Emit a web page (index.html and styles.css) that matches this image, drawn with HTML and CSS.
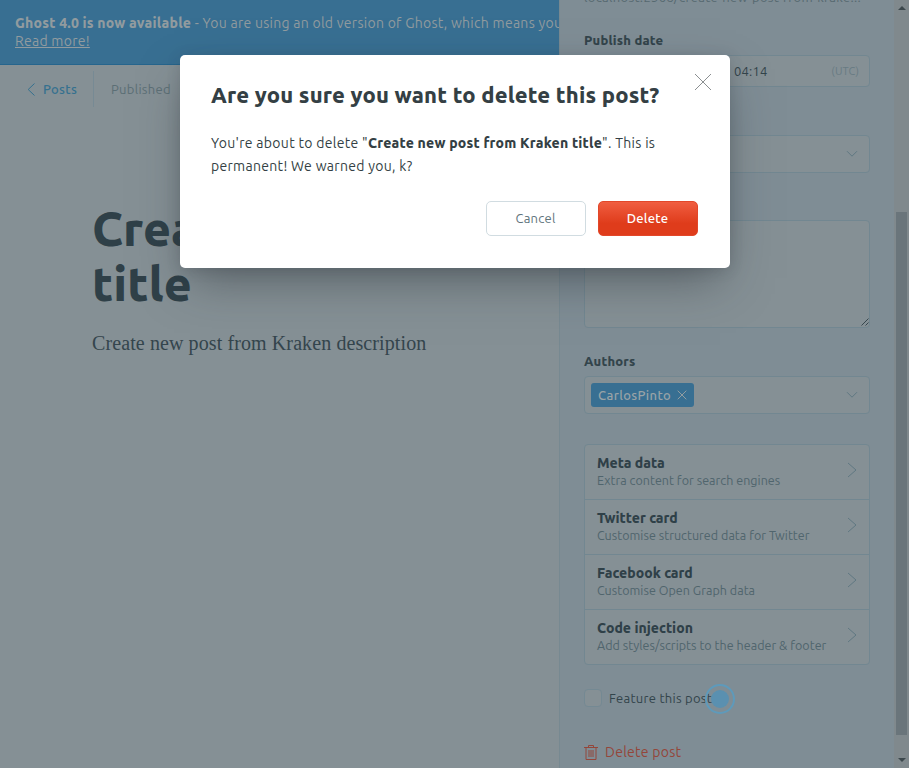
FILE: index.html
```
<!DOCTYPE html>
<html lang="en">
<head>
<meta charset="utf-8">
<title>Ghost editor</title>
<link rel="stylesheet" href="styles.css">
</head>
<body>
<div class="app">
  <main class="editor">
    <div class="alert"><div class="alert-line"><b>Ghost 4.0 is now available</b> - You are using an old version of Ghost, which means you</div><a class="alert-link">Read more!</a></div>
    <header class="toolbar">
      <a class="back"><svg width="8" height="13" viewBox="0 0 8 13"><path d="M7.5 .5L1.2 6.5l6.3 6"/></svg>Posts</a>
      <span class="status">Published</span>
    </header>
    <article class="post">
      <h1>Create new post from Kraken<br>title</h1>
      <p>Create new post from Kraken description</p>
    </article>
  </main>
  <aside class="settings">
    <div class="url">localhost:2368/create-new-post-from-krake...</div>
    <label class="label">Publish date</label>
    <div class="dates"><span class="time">04:14</span><span class="utc">(UTC)</span></div>
    <div class="field select tags"><svg class="chev" width="12" height="8" viewBox="0 0 12 8"><path d="M1 1.2l5 5 5-5"/></svg></div>
    <div class="field excerpt"><svg width="8" height="8" viewBox="0 0 8 8"><path d="M.5 7.5l7-7M4.5 7.5l3-3"/></svg></div>
    <label class="label authors-label">Authors</label>
    <div class="field select authors"><span class="token">CarlosPinto<svg width="10" height="10" viewBox="0 0 10 10"><path d="M.7.7l8.6 8.6M9.3.7L.7 9.3"/></svg></span><svg class="chev" width="12" height="8" viewBox="0 0 12 8"><path d="M1 1.2l5 5 5-5"/></svg></div>
    <ul class="nav">
      <li><div><b>Meta data</b><span>Extra content for search engines</span></div><svg width="10" height="16" viewBox="0 0 10 16"><path d="M1 1l8 7-8 7"/></svg></li>
      <li><div><b>Twitter card</b><span>Customise structured data for Twitter</span></div><svg width="10" height="16" viewBox="0 0 10 16"><path d="M1 1l8 7-8 7"/></svg></li>
      <li><div><b>Facebook card</b><span>Customise Open Graph data</span></div><svg width="10" height="16" viewBox="0 0 10 16"><path d="M1 1l8 7-8 7"/></svg></li>
      <li><div><b>Code injection</b><span>Add styles/scripts to the header &amp; footer</span></div><svg width="10" height="16" viewBox="0 0 10 16"><path d="M1 1l8 7-8 7"/></svg></li>
    </ul>
    <div class="feature"><i class="box"></i><span>Feature this post</span></div>
    <div class="delete-post"><svg width="14" height="15" viewBox="0 0 14 15"><path d="M0 2.5h14M4.5 2.5v-2h5v2M2 2.5v12h10v-12M5 5v7M7 5v7M9 5v7"/></svg>Delete post</div>
  </aside>
  <div class="scrollbar"><i class="arrow up"></i><i class="thumb"></i><i class="arrow down"></i></div>
</div>
<svg class="pointer" width="30" height="30" viewBox="0 0 30 30"><circle cx="15" cy="15" r="14"/><circle class="dot" cx="15" cy="15" r="9"/></svg>
<section class="modal">
  <svg class="close" width="18" height="18" viewBox="0 0 18 18"><path d="M1 1l16 16M17 1L1 17"/></svg>
  <h2>Are you sure you want to delete this post?</h2>
  <p>You're about to delete "<b>Create new post from Kraken title</b>". This is<br>permanent! We warned you, k?</p>
  <div class="actions"><button class="btn cancel">Cancel</button><button class="btn danger">Delete</button></div>
</section>
</body>
</html>
```
FILE: styles.css
```
* { box-sizing: border-box; }
body { margin: 0; background: #859095; color: #33444b; font: 14px/18px Ubuntu, "Noto Sans", sans-serif; letter-spacing: .2px; overflow: hidden; }
b { font-weight: 800; letter-spacing: .2px; }
svg { fill: none; stroke: #607882; flex: none; }
.app { display: flex; width: 909px; height: 768px; overflow: hidden; }

.editor { width: 559px; overflow: hidden; }
.alert { height: 65px; padding: 14px 0 0 15px; background: #386f92; border-bottom: 1px solid #26658d; color: #919b9f; white-space: nowrap; letter-spacing: .27px; }
.alert-link { text-decoration: underline; }
.toolbar { display: flex; align-items: center; height: 48px; padding-left: 27px; font-size: 13px; color: #5c6f76; }
.back { display: flex; align-items: center; gap: 8px; width: 67px; height: 36px; border-right: 1px solid #778a94; color: #35718f; font-weight: 500; letter-spacing: .3px; }
.back svg { stroke: #35718f; }
.status { margin-left: 17px; letter-spacing: .3px; }
.post { padding: 88px 0 0 92px; }
.post h1 { margin: 0; font-size: 48px; line-height: 55px; font-weight: 800; letter-spacing: 0; white-space: nowrap; color: #2f4048; }
.post p { margin: 16px 0 0; font: 20px/32px "Liberation Serif", serif; letter-spacing: .1px; color: #34454d; }

.settings { display: flex; flex-direction: column; width: 335px; height: 768px; padding: 0 24px; border-left: 1px solid #778991; background: #7f8d95; }
.url { height: 18px; margin-top: -12px; font-size: 13px; letter-spacing: .33px; color: #566970; white-space: nowrap; }
.label { margin-top: 25px; height: 18px; font-size: 13px; font-weight: 800; letter-spacing: .2px; }
.dates, .field { border: 1px solid #728791; border-radius: 4px; background: #859095; }
.dates { display: flex; align-items: center; justify-content: space-between; height: 32px; margin-top: 6px; padding: 0 10px 0 149px; font-size: 13px; }
.utc { font-size: 11px; color: #687b83; letter-spacing: .1px; }
.select { display: flex; align-items: center; justify-content: flex-end; height: 38px; padding: 0 11px 0 6px; }
.tags { margin-top: 48px; }
.excerpt { display: flex; align-items: flex-end; justify-content: flex-end; height: 108px; margin-top: 47px; padding: 1px 0 1px 1px; }
.excerpt svg { stroke: #36474e; }
.authors-label { margin-top: 24px; }
.authors { margin-top: 6px; justify-content: space-between; }
.token { display: flex; align-items: center; gap: 6px; height: 24px; padding: 0 7px; border-radius: 3px; background: #386f92; color: #98a3a7; font-size: 13px; font-weight: 500; letter-spacing: .36px; }
.token svg { stroke: #929da1; }
.nav { margin: 30px 0 0; padding: 0; list-style: none; border: 1px solid #728791; border-radius: 4px; background: #859095; }
.nav li { display: flex; align-items: center; justify-content: space-between; height: 55px; padding: 0 12px 2px; border-bottom: 1px solid #728791; }
.nav li:last-child { height: 54px; padding-bottom: 1px; border-bottom: 0; }
.nav svg { margin-top: -2px; }
.nav li:last-child svg { margin-top: -3px; }
.nav b { display: block; line-height: 18px; letter-spacing: 0; color: #2f4048; }
.nav span { display: block; font-size: 12.5px; line-height: 17px; letter-spacing: .04px; color: #50656d; }
.feature { display: flex; align-items: center; gap: 7px; margin-top: 24px; height: 18px; font-size: 13px; letter-spacing: .27px; }
.box { width: 18px; height: 18px; border: 1px solid #748993; border-radius: 4px; background: #859095; }
.delete-post { display: flex; align-items: center; gap: 7px; height: 18px; margin-top: 36px; letter-spacing: .27px; color: #94463a; }
.delete-post svg { stroke: #94463a; }

.scrollbar { display: flex; flex-direction: column; align-items: center; width: 15px; height: 768px; background: #80898d; }
.arrow { border: 4px solid transparent; }
.up { margin-top: 2px; border-bottom-color: #3c484d; }
.thumb { width: 11px; height: 523px; margin-top: 202px; background: #6a757b; }
.down { margin-top: 23px; border-top-color: #3c484d; }

.pointer { position: absolute; left: 705px; top: 684px; stroke: #5e9abb; stroke-width: 2; }
.pointer .dot { fill: #5a90b0; stroke: none; }

.modal { position: absolute; left: 180px; top: 55px; width: 550px; height: 213px; padding: 27px 32px 0 31px; border-radius: 5px; background: #fff; color: #343f44; box-shadow: 0 20px 45px -10px rgba(40,45,52,.5), 0 2px 14px rgba(50,60,70,.2); }
.modal h2 { margin: 0; font-size: 22px; line-height: 25px; font-weight: 800; letter-spacing: .18px; }
.modal p { margin: 25px 0 0; line-height: 23px; letter-spacing: .3px; }
.close { position: absolute; right: 18px; top: 18px; stroke: #8b8f91; stroke-width: 1; }
.actions { display: flex; justify-content: flex-end; gap: 12px; margin-top: 23px; }
.btn { width: 100px; height: 35px; padding: 0 1px 2px 0; border: 1px solid #d1dce1; border-radius: 5px; background: #fff; color: #60747c; font: 400 13px Ubuntu, "Noto Sans", sans-serif; letter-spacing: .25px; }
.danger { border-color: #e2472a; background: linear-gradient(#f05d40, #df3c1b 65%); color: #fff; font-weight: 500; }
```
